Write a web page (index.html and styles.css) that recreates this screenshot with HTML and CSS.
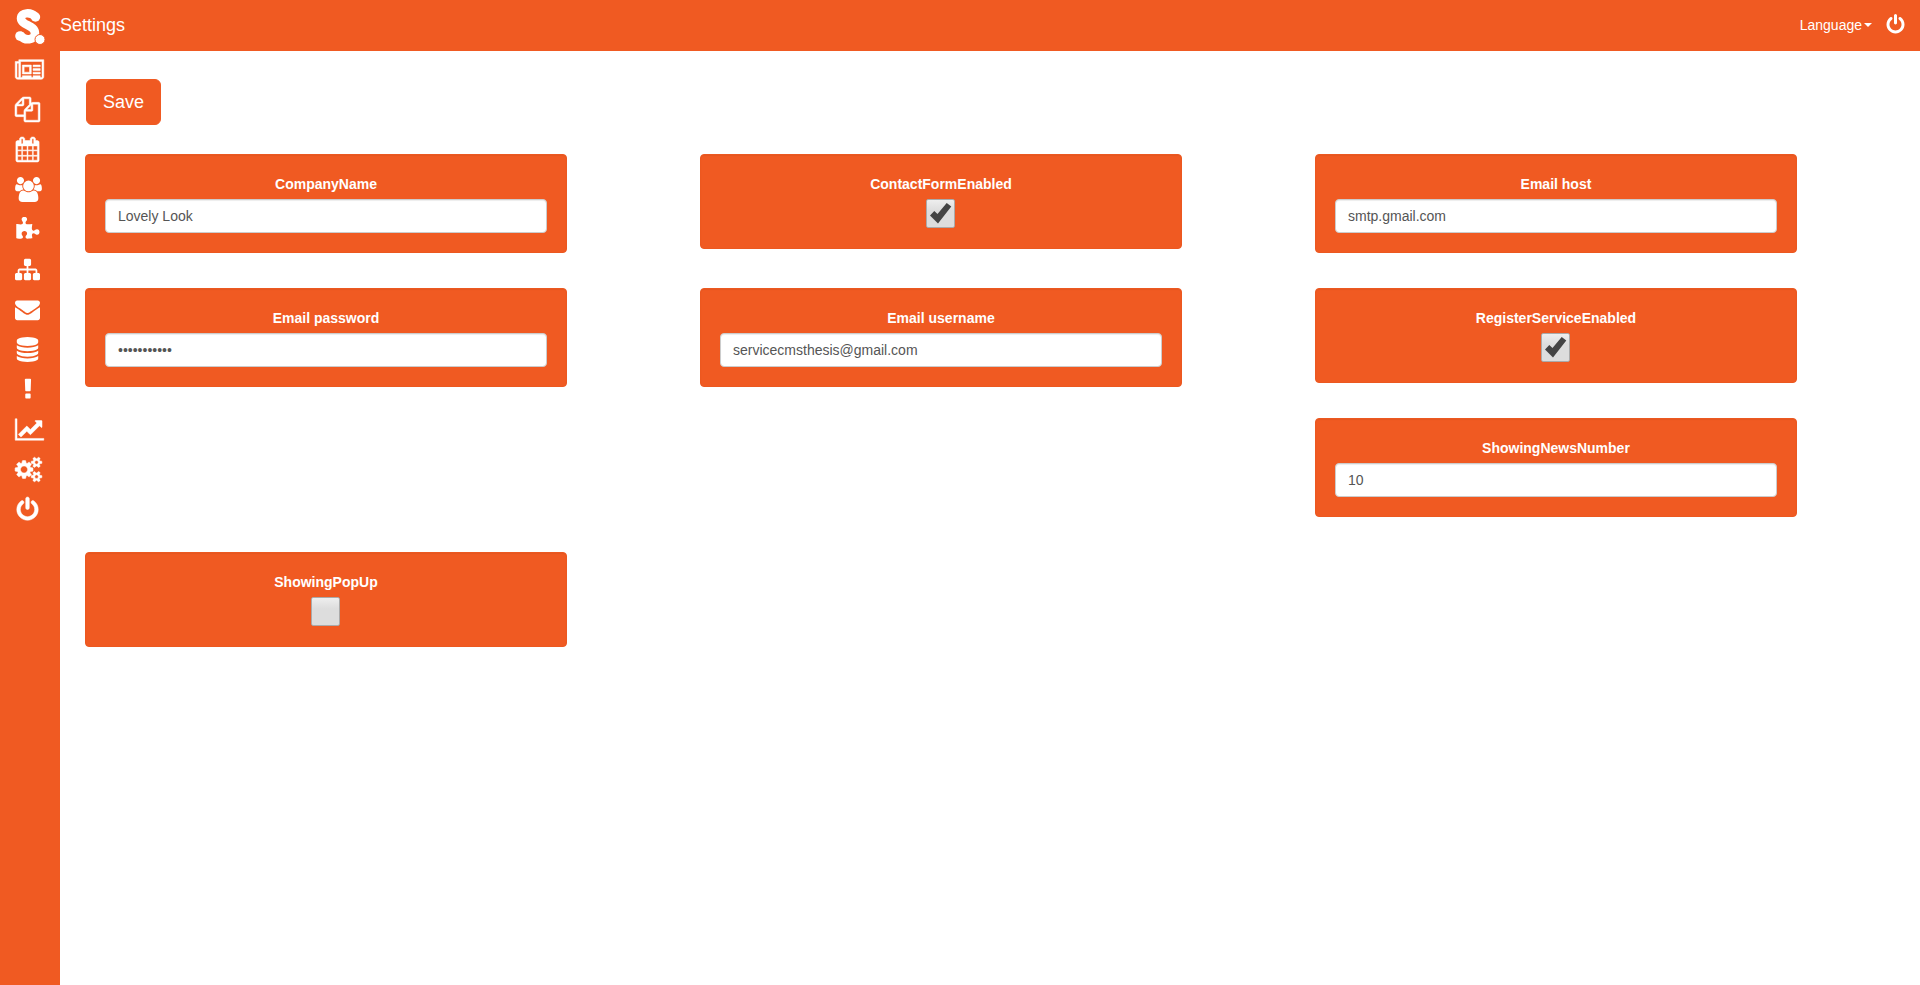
FILE: index.html
```html
<!DOCTYPE html>
<html lang="en">
<head>
<meta charset="utf-8">
<title>Settings</title>
<link rel="stylesheet" href="styles.css">
</head>
<body>
<div class="layout">
  <aside class="sidebar">
    <a class="logo" href="#" aria-label="Home">
      <svg width="30" height="36" viewBox="0 0 30 36"><path d="M20 7.500C16 3 6 3 6 9.500C6.500 17 20 15.500 20 24.500C19.500 31.500 10 32 6 27" fill="none" stroke="#fff" stroke-width="8.500" stroke-linecap="round"/><circle cx="20.500" cy="8" r="4.700" fill="#fff"/><circle cx="5" cy="27" r="4.800" fill="#fff"/><circle cx="25" cy="30.500" r="5" fill="#fff" stroke="#f05a22"/></svg>
    </a>
    <nav class="menu">
      <a href="#" aria-label="News"><svg class="icon wide bold" viewBox="0 -192 2048 1792"><path fill-rule="evenodd" d="M1024 512h-384v384h384v-384zM1152 1152v128h-640v-128h640zM1152 384v640h-640v-640h640zM1792 1152v128h-512v-128h512zM1792 896v128h-512v-128h512zM1792 640v128h-512v-128h512zM1792 384v128h-512v-128h512zM256 1216v-960h-128v960q0 26 19 45t45 19 45-19 19-45zM1920 1216v-1088h-1536v1088q0 33-11 64h1483q26 0 45-19t19-45zM2048 0v1216q0 80-56 136t-136 56h-1664q-80 0-136-56t-56-136v-1088h256v-128h1792z"/></svg></a>
      <a href="#" aria-label="Pages"><svg class="icon bold" viewBox="0 0 1792 1792"><path d="M1696 384q40 0 68 28t28 68v1216q0 40-28 68t-68 28h-960q-40 0-68-28t-28-68v-288h-544q-40 0-68-28t-28-68v-672q0-40 20-88t48-76l408-408q28-28 76-48t88-20h416q40 0 68 28t28 68v328q68-40 128-40h416zm-544 213l-299 299h299v-299zm-640-384l-299 299h299v-299zm196 647l316-316v-416h-384v416q0 40-28 68t-68 28h-416v640h512v-256q0-40 20-88t48-76zm956 804v-1152h-384v416q0 40-28 68t-68 28h-416v640h896z"/></svg></a>
      <a href="#" aria-label="Calendar"><svg class="icon bold" viewBox="0 0 1792 1792"><path d="M192 1664h288v-288h-288v288zm352 0h320v-288h-320v288zm-352-352h288v-320h-288v320zm352 0h320v-320h-320v320zm-352-384h288v-288h-288v288zm736 736h320v-288h-320v288zm-384-736h320v-288h-320v288zm768 736h288v-288h-288v288zm-384-352h320v-320h-320v320zm-352-864v-288q0-13-9.500-22.500t-22.500-9.500h-64q-13 0-22.500 9.500t-9.500 22.500v288q0 13 9.500 22.500t22.500 9.500h64q13 0 22.500-9.500t9.500-22.500zm736 864h288v-320h-288v320zm-384-384h320v-288h-320v288zm384 0h288v-288h-288v288zm32-480v-288q0-13-9.500-22.500t-22.500-9.500h-64q-13 0-22.500 9.500t-9.500 22.500v288q0 13 9.500 22.500t22.500 9.500h64q13 0 22.500-9.500t9.500-22.500zm384-64v1280q0 52-38 90t-90 38h-1408q-52 0-90-38t-38-90v-1280q0-52 38-90t90-38h128v-96q0-66 47-113t113-47h64q66 0 113 47t47 113v96h384v-96q0-66 47-113t113-47h64q66 0 113 47t47 113v96h128q52 0 90 38t38 90z"/></svg></a>
      <a href="#" aria-label="Users"><svg class="icon medium" viewBox="0 0 1920 1792"><path d="M593 896q-162 5-265 128h-134q-82 0-138-40.500t-56-118.500q0-353 124-353 6 0 43.500 21t97.500 42.500 119 21.500q67 0 133-23-5 37-5 66 0 139 81 256zm1071 637q0 120-73 189.500t-194 69.500h-874q-121 0-194-69.500t-73-189.500q0-53 3.500-103.500t14-109 26.500-108.500 43-97.500 62-81 85.500-53.500 111.500-20q10 0 43 21.500t73 48 107 48 135 21.500 135-21.500 107-48 73-48 43-21.500q61 0 111.500 20t85.500 53.500 62 81 43 97.500 26.500 108.500 14 109 3.500 103.500zm-1024-1277q0 106-75 181t-181 75-181-75-75-181 75-181 181-75 181 75 75 181zm704 384q0 159-112.500 271.500t-271.500 112.500-271.500-112.500-112.500-271.500 112.500-271.500 271.500-112.500 271.500 112.500 112.500 271.500zm576 225q0 78-56 118.500t-138 40.500h-134q-103-123-265-128 81-117 81-256 0-29-5-66 66 23 133 23 59 0 119-21.500t97.500-42.500 43.500-21q124 0 124 353zm-128-609q0 106-75 181t-181 75-181-75-75-181 75-181 181-75 181 75 75 181z"/></svg></a>
      <a href="#" aria-label="Modules"><svg class="icon" viewBox="0 0 1792 1792"><path d="M1755 1083q0 81-44.500 135t-123.500 54q-41 0-77.500-17.500t-59-38-56.500-38-71-17.500q-110 0-110 124 0 39 16 115t15 115v5q-22 0-33 1-34 3-97.500 11.500t-115.500 13.500-98 5q-61 0-103-26.500t-42-83.500q0-37 17.500-71t38-56.500 38-59 17.500-77.500q0-79-54-123.500t-135-44.500q-84 0-143 45.500t-59 127.500q0 43 15 83t33.500 64.500 33.500 53 15 50.500q0 45-46 89-37 35-117 35-95 0-245-24-9-2-27.500-4t-27.500-4l-13-2q-1 0-3-1-2 0-2-1v-1024q2 1 17.500 3.500t34 5 21.500 3.500q150 24 245 24 80 0 117-35 46-44 46-89 0-22-15-50.500t-33.500-53-33.500-64.500-15-83q0-82 59-127.500t144-45.500q80 0 134 44.500t54 123.500q0 41-17.500 77.500t-38 59-38 56.500-17.500 71q0 57 42 83.500t103 26.500q64 0 180-15t163-17v2q-1 2-3.500 17.500t-5 34-3.500 21.500q-24 150-24 245 0 80 35 117 44 46 89 46 22 0 50.500-15t53-33.500 64.500-33.500 83-15q82 0 127.500 59t45.500 143z"/></svg></a>
      <a href="#" aria-label="Site map"><svg class="icon" viewBox="0 0 1792 1792"><path d="M1792 1248v320q0 40-28 68t-68 28h-320q-40 0-68-28t-28-68v-320q0-40 28-68t68-28h96v-192h-512v192h96q40 0 68 28t28 68v320q0 40-28 68t-68 28h-320q-40 0-68-28t-28-68v-320q0-40 28-68t68-28h96v-192h-512v192h96q40 0 68 28t28 68v320q0 40-28 68t-68 28h-320q-40 0-68-28t-28-68v-320q0-40 28-68t68-28h96v-192q0-52 38-90t90-38h512v-192h-96q-40 0-68-28t-28-68v-320q0-40 28-68t68-28h320q40 0 68 28t28 68v320q0 40-28 68t-68 28h-96v192h512q52 0 90 38t38 90v192h96q40 0 68 28t28 68z"/></svg></a>
      <a href="#" aria-label="Mail"><svg class="icon" viewBox="0 0 1792 1792"><path d="M1792 710v794q0 66-47 113t-113 47h-1472q-66 0-113-47t-47-113v-794q44 49 101 87 362 246 497 345 57 42 92.500 65.500t94.500 48 110 24.500h2q51 0 110-24.500t94.500-48 92.500-65.500q170-123 498-345 57-39 100-87zm0-294q0 79-49 151t-122 123q-376 261-468 325-10 7-42.500 31t-54 38.500-52 32.500-57.500 27-50 9h-2q-23 0-50-9t-57.500-27-52-32.500-54-38.500-42.500-31q-91-64-262-182.500t-205-142.500q-62-42-117-115.500t-55-136.500q0-78 41.500-130t118.500-52h1472q65 0 112.500 47t47.500 113z"/></svg></a>
      <a href="#" aria-label="Database"><svg class="icon" viewBox="0 0 1792 1792"><path d="M896 768q237 0 443-43t325-127v170q0 69-103 128t-280 93.500-385 34.500-385-34.500-280-93.500-103-128v-170q119 84 325 127t443 43zm0 768q237 0 443-43t325-127v170q0 69-103 128t-280 93.500-385 34.500-385-34.500-280-93.500-103-128v-170q119 84 325 127t443 43zm0-384q237 0 443-43t325-127v170q0 69-103 128t-280 93.500-385 34.500-385-34.500-280-93.500-103-128v-170q119 84 325 127t443 43zm0-1152q208 0 385 34.500t280 93.500 103 128v128q0 69-103 128t-280 93.500-385 34.500-385-34.500-280-93.500-103-128v-128q0-69 103-128t280-93.500 385-34.500z"/></svg></a>
      <a href="#" aria-label="Alerts"><svg class="icon" viewBox="0 0 1792 1792"><path d="M1120 1248v224q0 26-19 45t-45 19h-256q-26 0-45-19t-19-45v-224q0-26 19-45t45-19h256q26 0 45 19t19 45zm30-1056l-28 768q-1 26-20.500 45t-45.500 19h-256q-26 0-45.500-19t-20.500-45l-28-768q-1-26 17.500-45t44.500-19h320q26 0 44.500 19t17.500 45z"/></svg></a>
      <a href="#" aria-label="Statistics"><svg class="icon wide bold" viewBox="0 0 2048 1792"><path d="M2048 1536v128h-2048v-1536h128v1408h1920zM1920 288v435q0 21-19.500 29.500t-35.500-7.500l-121-121-633 633q-10 10-23 10t-23-10l-233-233-416 416-192-192 585-585q10-10 23-10t23 10l233 233 464-464-121-121q-16-16-7.500-35.500t29.500-19.500h435q14 0 23 9t9 23z"/></svg></a>
      <a href="#" aria-label="Settings"><svg class="icon medium bold" viewBox="0 0 1920 1792"><path d="M896 896q0-106-75-181t-181-75-181 75-75 181 75 181 181 75 181-75 75-181zm768 512q0-52-38-90t-90-38-90 38-38 90q0 53 37.500 90.500t90.500 37.500 90.500-37.500 37.500-90.500zm0-1024q0-52-38-90t-90-38-90 38-38 90q0 53 37.500 90.500t90.500 37.500 90.500-37.500 37.500-90.500zm-384 421v185q0 10-7 19.500t-16 10.500l-155 24q-11 35-32 76 34 48 90 115 7 11 7 20 0 12-7 19-23 30-82.500 89.500t-78.500 59.500q-11 0-21-7l-115-90q-37 19-77 31-11 108-23 155-7 24-30 24h-186q-11 0-20-7.500t-10-17.500l-23-153q-34-10-75-31l-118 89q-7 7-20 7-11 0-21-8-144-133-144-160 0-9 7-19 10-14 41-53t47-61q-23-44-35-82l-152-24q-10-1-17-9.500t-7-19.500v-185q0-10 7-19.500t16-10.500l155-24q11-35 32-76-34-48-90-115-7-11-7-20 0-12 7-20 22-30 82-89t79-59q11 0 21 7l115 90q34-18 77-32 11-108 23-154 7-24 30-24h186q11 0 20 7.500t10 17.500l23 153q34 10 75 31l118-89q8-7 20-7 11 0 21 8 144 133 144 160 0 8-7 19-12 16-42 54t-45 60q23 48 34 82l152 23q10 2 17 10.500t7 19.500zm640 533v140q0 16-149 31-12 27-30 52 51 113 51 138 0 4-4 7-122 71-124 71-8 0-46-47t-52-68q-20 2-30 2t-30-2q-14 21-52 68t-46 47q-2 0-124-71-4-3-4-7 0-25 51-138-18-25-30-52-149-15-149-31v-140q0-16 149-31 13-29 30-52-51-113-51-138 0-4 4-7 4-2 35-20t59-34 30-16q8 0 46 46.500t52 67.500q20-2 30-2t30 2q51-71 92-112l6-2q4 0 124 70 4 3 4 7 0 25-51 138 17 23 30 52 149 15 149 31zm0-1024v140q0 16-149 31-12 27-30 52 51 113 51 138 0 4-4 7-122 71-124 71-8 0-46-47t-52-68q-20 2-30 2t-30-2q-14 21-52 68t-46 47q-2 0-124-71-4-3-4-7 0-25 51-138-18-25-30-52-149-15-149-31v-140q0-16 149-31 13-29 30-52-51-113-51-138 0-4 4-7 4-2 35-20t59-34 30-16q8 0 46 46.500t52 67.500q20-2 30-2t30 2q51-71 92-112l6-2q4 0 124 70 4 3 4 7 0 25-51 138 17 23 30 52 149 15 149 31z"/></svg></a>
      <a href="#" aria-label="Log out"><svg class="icon bold" viewBox="0 0 1792 1792"><path id="power" d="M1664 896q0 156-61 298t-164 245-245 164-298 61-298-61-245-164-164-245-61-298q0-182 80.500-343t226.500-270q43-32 95.500-25t83.500 50q32 42 24.500 94.500t-49.500 84.500q-98 74-151.500 181t-53.500 228q0 104 40.500 198.500t109.500 163.500 163.500 109.500 198.500 40.500 198.500-40.500 163.500-109.500 109.500-163.500 40.500-198.500q0-121-53.500-228t-151.500-181q-42-32-49.500-84.500t24.500-94.500q31-43 84-50t95 25q146 109 226.500 270t80.500 343zm-640-768v640q0 52-38 90t-90 38-90-38-38-90v-640q0-52 38-90t90-38 90 38 38 90z"/></svg></a>
    </nav>
  </aside>
  <div class="page">
    <header class="topbar">
      <h1 class="title">Settings</h1>
      <div class="actions">
        <button class="language" type="button">Language<span class="caret"></span></button>
        <a class="logout" href="#" aria-label="Log out"><svg class="icon small" viewBox="0 0 1792 1792"><use href="#power"/></svg></a>
      </div>
    </header>
    <main class="content">
      <form>
        <button class="save" type="button">Save</button>
        <div class="settings">
          <div class="cell"><div class="card"><label for="company">CompanyName</label><input class="field" id="company" type="text" value="Lovely Look"></div></div>
          <div class="cell"><div class="card"><label for="contact">ContactFormEnabled</label><div class="check"><input id="contact" type="checkbox" checked><svg class="tick" viewBox="0 0 29 29"><path d="M4 16.500L8.300 12L11.500 15L20.700 4L25.300 7.500L12 24.500Z"/></svg></div></div></div>
          <div class="cell"><div class="card"><label for="host">Email host</label><input class="field" id="host" type="text" value="smtp.gmail.com"></div></div>
          <div class="cell first"><div class="card"><label for="password">Email password</label><input class="field" id="password" type="password" value="placeholder"></div></div>
          <div class="cell"><div class="card"><label for="username">Email username</label><input class="field" id="username" type="text" value="servicecmsthesis@gmail.com"></div></div>
          <div class="cell"><div class="card"><label for="register">RegisterServiceEnabled</label><div class="check"><input id="register" type="checkbox" checked><svg class="tick" viewBox="0 0 29 29"><path d="M4 16.500L8.300 12L11.500 15L20.700 4L25.300 7.500L12 24.500Z"/></svg></div></div></div>
          <div class="cell"><div class="card"><label for="news">ShowingNewsNumber</label><input class="field" id="news" type="text" value="10"></div></div>
          <div class="cell first"><div class="card"><label for="popup">ShowingPopUp</label><div class="check"><input id="popup" type="checkbox"><svg class="tick" viewBox="0 0 29 29"><path d="M4 16.500L8.300 12L11.500 15L20.700 4L25.300 7.500L12 24.500Z"/></svg></div></div></div>
        </div>
      </form>
    </main>
  </div>
</div>
</body>
</html>
```
FILE: styles.css
```css
* {
  box-sizing: border-box;
}

body {
  margin: 0;
  background: #fff;
  color: #333;
  font: 14px/20px "Liberation Sans", Arial, sans-serif;
}

button,
input {
  font: inherit;
}

.layout {
  display: flex;
  min-height: 100vh;
}

.sidebar {
  flex: none;
  width: 60px;
  background: #f05a22;
}

.logo {
  display: block;
  height: 49px;
  padding: 9px 0 0 15px;
}

.logo svg {
  display: block;
}

.menu a {
  display: flex;
  align-items: center;
  height: 40px;
  padding-left: 15px;
}

.icon {
  display: block;
  flex: none;
  width: 25px;
  height: 25px;
  fill: #fff;
}

.icon.bold {
  overflow: visible;
  stroke: #fff;
  stroke-width: 36;
}

.icon.medium {
  width: 27px;
}

.icon.wide {
  width: 29px;
}

.icon.small {
  width: 21px;
  height: 21px;
}

.page {
  flex: 1;
  min-width: 0;
}

.topbar {
  display: flex;
  align-items: center;
  justify-content: space-between;
  height: 51px;
  padding: 0 14px 2px 0;
  background: #f05a22;
  color: #fff;
}

.title {
  margin: 0;
  font-size: 18px;
  font-weight: 400;
}

.actions {
  display: flex;
  align-items: center;
  gap: 13px;
}

.language {
  display: flex;
  align-items: center;
  gap: 2px;
  padding: 0;
  border: 0;
  background: none;
  color: #fff;
}

.caret {
  border: 4px solid transparent;
  border-top-color: #fff;
  border-bottom: 0;
}

.content {
  padding: 28px 0 0 15px;
}

.save {
  display: block;
  height: 46px;
  margin: 0 0 29px 11px;
  padding: 10px 16px;
  border: 1px solid #f05a22;
  border-radius: 6px;
  background: #f05a22;
  color: #fff;
  font-size: 18px;
  line-height: 24px;
}

.settings {
  display: flow-root;
}

.cell {
  float: left;
  width: calc(100% / 3);
  padding-left: 10px;
  margin-bottom: 35px;
}

.cell.first {
  clear: both;
}

.card {
  width: calc(80% - 2px);
  padding: 19px;
  border: 1px solid #ec5820;
  border-radius: 4px;
  background: #f05a22;
  box-shadow: inset 0 1px 1px rgba(0, 0, 0, 0.05);
}

.card label {
  display: block;
  margin-bottom: 5px;
  color: #fff;
  font-weight: 700;
  text-align: center;
}

.field {
  display: block;
  width: 100%;
  height: 34px;
  padding: 6px 12px;
  border: 1px solid #ccc;
  border-radius: 4px;
  background: #fff;
  box-shadow: inset 0 1px 1px rgba(0, 0, 0, 0.075);
  color: #555;
}

.check {
  position: relative;
  width: 29px;
  height: 30px;
  margin: 0 auto;
}

.check input {
  display: block;
  appearance: none;
  width: 29px;
  height: 29px;
  margin: 0;
  border: 1px solid #aaa;
  border-radius: 2px;
  background: linear-gradient(#eee, #ddd 40%, #ddd);
}

.tick {
  display: none;
  position: absolute;
  top: 0;
  left: 0;
  width: 29px;
  height: 29px;
  fill: #444;
  pointer-events: none;
}

.check input:checked + .tick {
  display: block;
}
```
